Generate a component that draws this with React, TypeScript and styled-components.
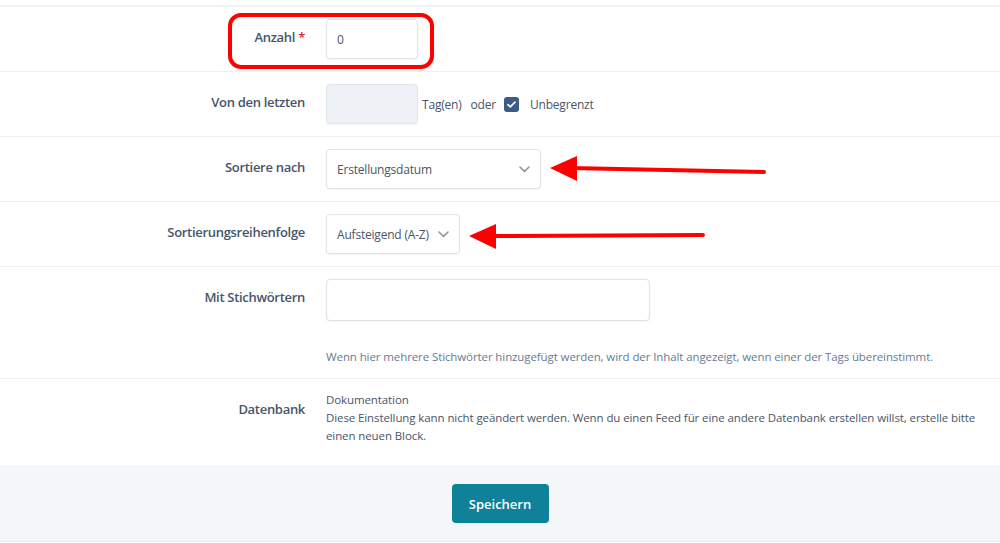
import { FC } from "react";
import styled, { createGlobalStyle } from "styled-components";

const GlobalStyle = createGlobalStyle`
  body {
    margin: 0;
    background: #ffffff;
    font-family: "Open Sans", "Noto Sans", sans-serif;
    color: #4a5568;
  }
  * { box-sizing: border-box; }
`;

const ChevronDown: FC = () => (
  <svg width="11" height="7" viewBox="0 0 11 7" fill="none">
    <path
      d="M1 1l4.5 4.5L10 1"
      stroke="#8c95a3"
      strokeWidth="1.6"
      strokeLinecap="round"
      strokeLinejoin="round"
    />
  </svg>
);

const CheckMark: FC = () => (
  <svg width="9" height="7" viewBox="0 0 9 7" fill="none">
    <path
      d="M1 3.6l2.3 2.2L8 1.2"
      stroke="#ffffff"
      strokeWidth="1.7"
      strokeLinecap="round"
      strokeLinejoin="round"
    />
  </svg>
);

type ArrowProps = { left: number; top: number; length: number; tilt: number };

// red annotation arrow, tip at the left end
const RedArrow: FC<ArrowProps> = ({ left, top, length, tilt }) => (
  <ArrowWrap style={{ left, top }}>
    <svg width={length} height="30" viewBox={`0 0 ${length} 30`}>
      <line
        x1="20"
        y1="13"
        x2={length - 2}
        y2={13 + tilt}
        stroke="#ff0000"
        strokeWidth="4"
        strokeLinecap="round"
      />
      <polygon points="0,13 27,1 27,26" fill="#ff0000" />
    </svg>
  </ArrowWrap>
);

const App: FC = () => {
  return (
    <Page>
      <GlobalStyle />
      <TopStrip />

      <Row>
        <Label>
          Anzahl <Req>*</Req>
        </Label>
        <Field>
          <TextInput width={92} value="0" readOnly />
        </Field>
      </Row>

      <Row>
        <Label>Von den letzten</Label>
        <Field>
          <InlineGroup>
            <TextInput width={92} value="" readOnly disabled />
            <Unit>Tag(en)</Unit>
            <Unit>oder</Unit>
            <CheckBox>
              <CheckMark />
            </CheckBox>
            <Unit>Unbegrenzt</Unit>
          </InlineGroup>
        </Field>
      </Row>

      <Row>
        <Label>Sortiere nach</Label>
        <Field>
          <Select width={215}>
            <span>Erstellungsdatum</span>
            <ChevronDown />
          </Select>
        </Field>
      </Row>

      <Row>
        <Label>Sortierungsreihenfolge</Label>
        <Field>
          <Select width={134}>
            <span>Aufsteigend (A-Z)</span>
            <ChevronDown />
          </Select>
        </Field>
      </Row>

      <Row>
        <Label>Mit Stichwörtern</Label>
        <Field>
          <TextInput width={324} height={42} value="" readOnly />
          <Help>
            Wenn hier mehrere Stichwörter hinzugefügt werden, wird der Inhalt
            angezeigt, wenn einer der Tags übereinstimmt.
          </Help>
        </Field>
      </Row>

      <Row last>
        <Label>Datenbank</Label>
        <Field>
          <Note>
            Dokumentation
            <br />
            Diese Einstellung kann nicht geändert werden. Wenn du einen Feed
            für eine andere Datenbank erstellen willst, erstelle bitte einen
            neuen Block.
          </Note>
        </Field>
      </Row>

      <Footer>
        <SaveButton>Speichern</SaveButton>
      </Footer>

      <Highlight />
      <RedArrow left={550} top={155} length={216} tilt={4} />
      <RedArrow left={469} top={223} length={236} tilt={-1} />
    </Page>
  );
};

export default App;

const Page = styled.div`
  position: relative;
  width: 1000px;
  height: 543px;
  overflow: hidden;
  background: #ffffff;
`;

const TopStrip = styled.div`
  height: 7px;
  border-bottom: 2px solid #f1f2f4;
`;

const Row = styled.div<{ last?: boolean }>`
  display: grid;
  grid-template-columns: 305px 1fr;
  column-gap: 21px;
  padding: 12px 16px ${(p) => (p.last ? "20px" : "12px")} 0;
  border-bottom: ${(p) => (p.last ? "none" : "1px solid #eceef1")};
`;

const Label = styled.div`
  text-align: right;
  padding-top: 8px;
  font-size: 13px;
  line-height: 20px;
  font-weight: 600;
  color: #46556a;
  letter-spacing: -0.3px;
`;

const Req = styled.span`
  color: #d62c2c;
`;

const Field = styled.div`
  display: flex;
  flex-direction: column;
  align-items: flex-start;
`;

const InlineGroup = styled.div`
  display: flex;
  align-items: center;
`;

const TextInput = styled.input<{ width: number; height?: number }>`
  width: ${(p) => p.width}px;
  height: ${(p) => p.height ?? 40}px;
  border: 1px solid #dfe3e9;
  border-radius: 4px;
  background: #ffffff;
  padding: 0 10px;
  font-family: "Open Sans", sans-serif;
  font-size: 12px;
  color: #4a5568;
  box-shadow: 0 1px 2px rgba(30, 45, 70, 0.05);
  outline: none;

  &:disabled {
    background: #eef1f5;
    border-color: #e3e7ec;
  }
`;

const Unit = styled.span`
  font-size: 12px;
  color: #4a5568;
  margin-left: 4px;
  margin-right: 5px;
  letter-spacing: -0.2px;
`;

const CheckBox = styled.span`
  display: inline-flex;
  align-items: center;
  justify-content: center;
  width: 15px;
  height: 15px;
  border-radius: 3px;
  background: #3b5b89;
  margin: 0 7px 0 3px;
`;

const Select = styled.div<{ width: number }>`
  display: flex;
  align-items: center;
  justify-content: space-between;
  width: ${(p) => p.width}px;
  height: 40px;
  padding: 0 10px 0 10px;
  border: 1px solid #dfe3e9;
  border-radius: 4px;
  background: #ffffff;
  box-shadow: 0 1px 2px rgba(30, 45, 70, 0.06);
  font-size: 12px;
  color: #4a5568;
  letter-spacing: -0.2px;
`;

const Help = styled.p`
  margin: 27px 0 0;
  font-size: 11.5px;
  line-height: 18px;
  color: #6a7a92;
  letter-spacing: -0.1px;
`;

const Note = styled.p`
  margin: 0;
  font-size: 11.5px;
  line-height: 18px;
  color: #4a5568;
  letter-spacing: -0.1px;
`;

const Footer = styled.div`
  display: flex;
  justify-content: center;
  padding: 19px 0 18px;
  background: #f5f6f8;
  border-bottom: 1px solid #e8ecf1;
`;

const SaveButton = styled.button`
  width: 97px;
  height: 39px;
  border: none;
  border-radius: 4px;
  background: #0f8199;
  color: #ffffff;
  font-family: "Open Sans", sans-serif;
  font-size: 13px;
  font-weight: 600;
  cursor: pointer;
`;

const Highlight = styled.div`
  position: absolute;
  left: 228px;
  top: 13px;
  width: 206px;
  height: 56px;
  border: 4px solid #ff0000;
  border-radius: 13px;
  pointer-events: none;
`;

const ArrowWrap = styled.div`
  position: absolute;
  pointer-events: none;
  line-height: 0;
`;
